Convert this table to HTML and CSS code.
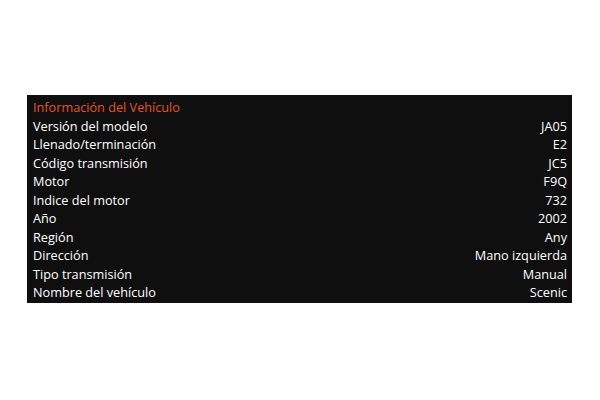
FILE: index.html
```html
<!DOCTYPE html>
<html lang="es">
<head>
<meta charset="utf-8">
<link rel="stylesheet" href="styles.css">
</head>
<body>
<div class="panel">
  <div class="title">Información del Vehículo</div>
  <div class="row"><span>Versión del modelo</span><span>JA05</span></div>
  <div class="row"><span>Llenado/terminación</span><span>E2</span></div>
  <div class="row"><span>Código transmisión</span><span>JC5</span></div>
  <div class="row"><span>Motor</span><span>F9Q</span></div>
  <div class="row"><span>Indice del motor</span><span>732</span></div>
  <div class="row"><span>Año</span><span>2002</span></div>
  <div class="row"><span>Región</span><span>Any</span></div>
  <div class="row"><span>Dirección</span><span>Mano izquierda</span></div>
  <div class="row"><span>Tipo transmisión</span><span>Manual</span></div>
  <div class="row"><span>Nombre del vehículo</span><span>Scenic</span></div>
</div>
</body>
</html>
```
FILE: styles.css
```css
html, body {
  margin: 0;
  padding: 0;
  background: #ffffff;
}
body {
  padding: 95px 28px 0 27px;
  font-family: "Open Sans", "Noto Sans", sans-serif;
  font-size: 12.7px;
}
.panel {
  background: #0f0f10;
  padding: 3px 5px 2px 6px;
  height: 208px;
  box-sizing: border-box;
  color: #ffffff;
}
.title {
  color: #e4542e;
  line-height: 18.5px;
}
.row {
  display: flex;
  justify-content: space-between;
  line-height: 18.5px;
}
```
